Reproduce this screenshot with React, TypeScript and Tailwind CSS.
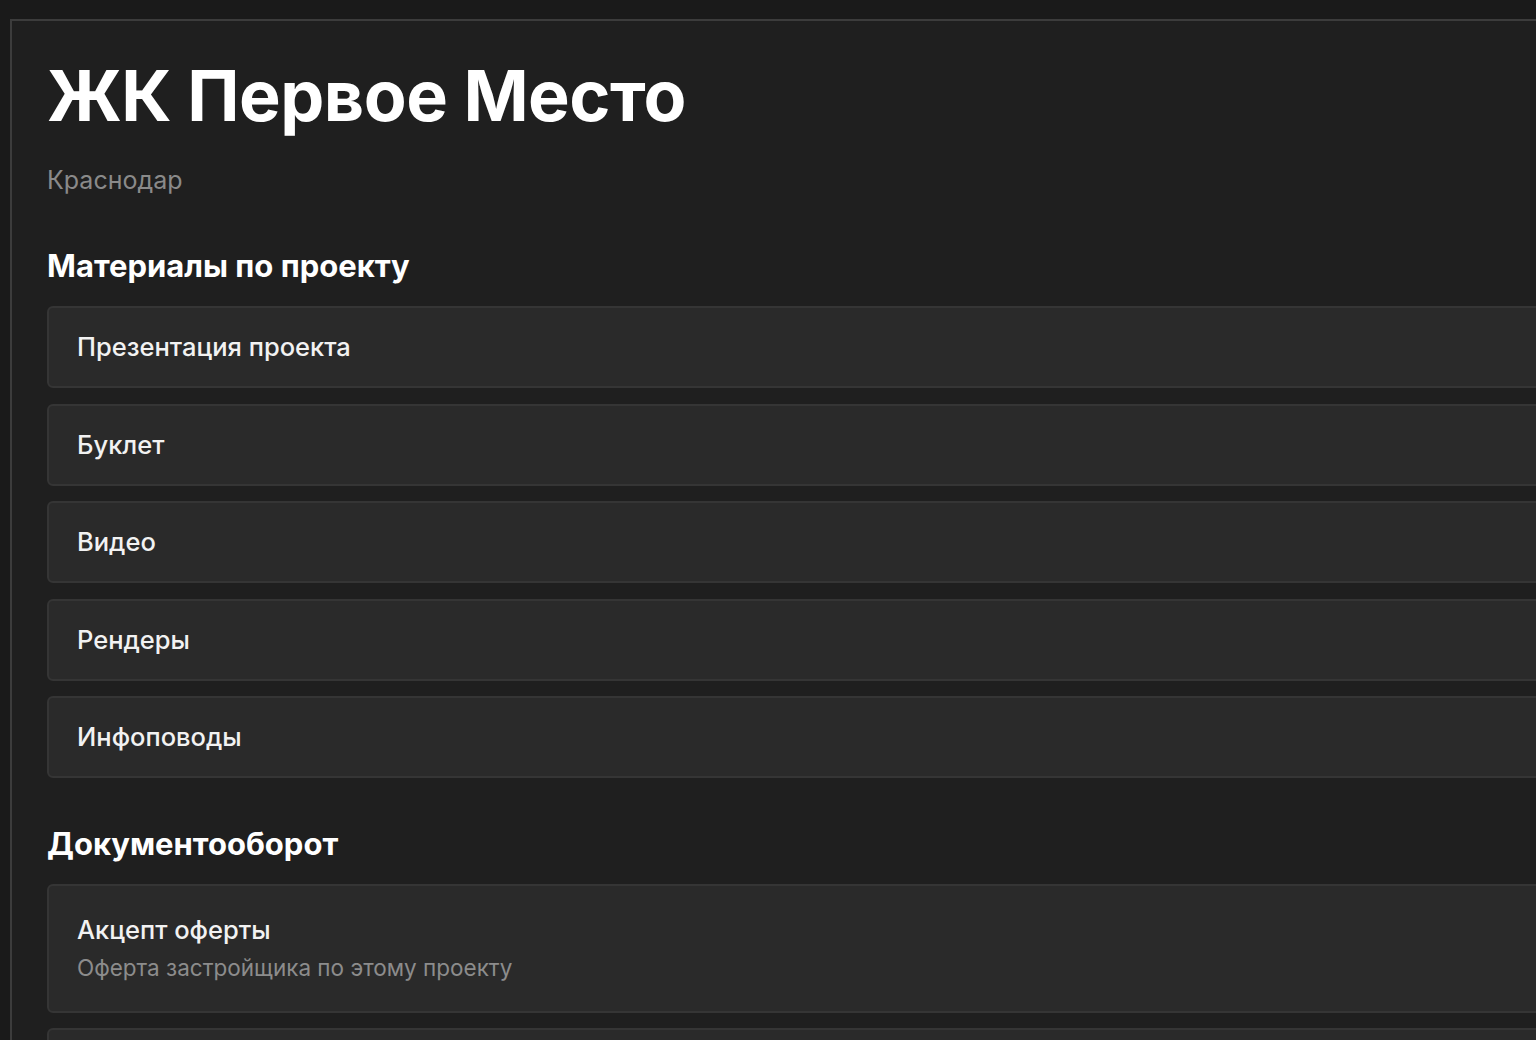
const materials = ["Презентация проекта", "Буклет", "Видео", "Рендеры", "Инфоповоды"];

const docs = [
  { title: "Акцепт оферты", subtitle: "Оферта застройщика по этому проекту" },
  { title: "", subtitle: "" },
];

function Card({ title, subtitle }: { title: string; subtitle?: string }) {
  return (
    <div
      className={`rounded-md border-2 border-[#353535] bg-[#2a2a2a] px-7 ${
        subtitle ? "pb-[29px] pt-[29px]" : "pb-[25px] pt-[24px]"
      }`}
    >
      <div className="min-h-[29px] text-[25.5px] font-medium leading-[29px] text-[#f2f2f2]">{title}</div>
      {subtitle && (
        <div className="mt-[10px] text-[22.5px] leading-[28px] text-[#8c8c8c]">{subtitle}</div>
      )}
    </div>
  );
}

export default function App() {
  return (
    <div
      className="h-[1040px] w-full overflow-hidden bg-[#1a1a1a] pl-[10px] pt-[19px]"
      style={{ fontFamily: "Inter, 'Noto Sans', sans-serif" }}
    >
      <div className="min-h-[1100px] w-[1600px] border-l-2 border-t-2 border-[#3c3c3c] bg-[#1f1f1f] pl-[35px] pr-[60px] pt-[35px]">
        <h1 className="text-[70px] font-bold leading-[80px] tracking-[-0.5px] text-white">ЖК Первое Место</h1>
        <div className="mt-[29px] text-[25px] leading-[30px] text-[#8a8a8a]">Краснодар</div>

        <h2 className="mt-[53px] text-[31px] font-bold leading-[36px] text-white">Материалы по проекту</h2>
        <div className="mt-[22px] flex flex-col gap-[15.5px]">
          {materials.map((m) => (
            <Card key={m} title={m} />
          ))}
        </div>

        <h2 className="mt-[48px] text-[31px] font-bold leading-[36px] text-white">Документооборот</h2>
        <div className="mt-[22px] flex flex-col gap-[15px]">
          {docs.map((d, i) => (
            <Card key={i} title={d.title} subtitle={d.subtitle} />
          ))}
        </div>
      </div>
    </div>
  );
}
